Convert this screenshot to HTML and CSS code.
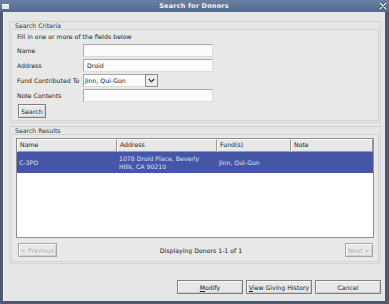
FILE: index.html
```html
<!DOCTYPE html>
<html>
<head>
<meta charset="utf-8">
<link rel="stylesheet" href="styles.css">
</head>
<body>
<div class="window">
  <div class="titlebar">
    <span class="menu-icon"></span>
    <span class="title">Search for Donors</span>
    <svg class="close" width="8" height="8" viewBox="0 0 8 8"><path d="M1 1 L7 7 M7 1 L1 7" stroke="#2a3550" stroke-width="2.6" stroke-linecap="round"/><path d="M1 1 L7 7 M7 1 L1 7" stroke="#ffffff" stroke-width="1.3" stroke-linecap="round"/></svg>
  </div>
  <div class="content">
    <div class="group criteria">
      <div class="legend">Search Criteria</div>
      <div class="panel">
        <div class="hint">Fill in one or more of the fields below</div>
        <div class="form">
          <span class="label">Name</span><div class="input"></div>
          <span class="label">Address</span><div class="input">Droid</div>
          <span class="label">Fund Contributed To</span>
          <div class="combo"><div class="combo-text">Jinn, Qui-Gon</div><div class="combo-btn"><svg width="7" height="5" viewBox="0 0 7 5"><path d="M0.8 1 L3.5 3.8 L6.2 1" fill="none" stroke="#222" stroke-width="1.1"/></svg></div></div>
          <span class="label">Note Contents</span><div class="input"></div>
        </div>
        <div class="search-row"><button class="btn search-btn">Search</button></div>
      </div>
    </div>
    <div class="group results">
      <div class="legend">Search Results</div>
      <div class="panel">
        <div class="table">
          <div class="thead">
            <div class="th c1">Name</div><div class="th c2">Address</div><div class="th c3">Fund(s)</div><div class="th c4">Note</div>
          </div>
          <div class="row selected">
            <div class="td c1">C-3PO</div><div class="td c2">1078 Droid Place, Beverly<br>Hills, CA 90210</div><div class="td c3">Jinn, Qui-Gon</div><div class="td c4"></div>
          </div>
        </div>
        <div class="pager">
          <button class="btn disabled prev">&lt; Previous</button>
          <span class="status">Displaying Donors 1-1 of 1</span>
          <button class="btn disabled next">Next &gt;</button>
        </div>
      </div>
    </div>
    <div class="actions">
      <button class="btn act"><u>M</u>odify</button>
      <button class="btn act"><u>V</u>iew Giving History</button>
      <button class="btn act">Cancel</button>
    </div>
  </div>
</div>
</body>
</html>
```
FILE: styles.css
```css
* { box-sizing: border-box; }
html, body { margin: 0; padding: 0; }
body {
  width: 389px;
  height: 304px;
  overflow: hidden;
  font-family: "DejaVu Sans", sans-serif;
  font-size: 6.2px;
  color: #1a1a1a;
  background: #4f5b74;
}
.window {
  width: 389px;
  height: 304px;
  display: flex;
  flex-direction: column;
  border-left: 3px solid #4e5a73;
  border-right: 4px solid #4e5a73;
  border-bottom: 3px solid #4e5a73;
  background: #e6e6e6;
}
.titlebar {
  height: 12px;
  flex: none;
  display: flex;
  align-items: center;
  background: linear-gradient(#6a80a3, #526a90);
  margin-left: -3px;
  margin-right: -4px;
  padding: 0 2px 0 2px;
}
.menu-icon {
  width: 7px;
  height: 5px;
  background: #e4e8f0;
  border-top: 1px solid #ffffff;
  flex: none;
}
.title {
  flex: 1;
  text-align: center;
  color: #f2f4f8;
  font-weight: bold;
  font-size: 6.5px;
  letter-spacing: 0.2px;
}
.close { flex: none; }
.content {
  flex: 1;
  display: flex;
  flex-direction: column;
  padding: 9px 4px 0 5px;
  border-left: 1px solid #f6f6f6;
}
.group {
  border: 1px solid #d6d6d6;
  border-top-color: #cfcfcf;
  padding: 0 1px 1px 1px;
  border-radius: 1px;
}
.legend {
  height: 7px;
  line-height: 7px;
  padding-left: 4px;
  color: #333;
}
.panel {
  border: 1px solid #d4d4d4;
  border-right-color: #cdcdcd;
  background: #e8e8e8;
  padding: 3px 4px 2px 4px;
}
.hint { height: 8px; line-height: 8px; padding-left: 1px; }
.form {
  margin-top: 3px;
  display: grid;
  grid-template-columns: 67px 130px;
  grid-auto-rows: 13px;
  row-gap: 2px;
  align-items: center;
}
.label { padding-left: 1px; white-space: nowrap; }
.input {
  height: 13px;
  background: #fbfbfb;
  border: 1px solid #a9a9a9;
  border-right-color: #dcdcdc;
  border-bottom-color: #dcdcdc;
  line-height: 11px;
  padding-left: 3px;
}
.combo { display: flex; height: 13px; }
.combo-text {
  width: 62px;
  background: #fbfbfb;
  border: 1px solid #a9a9a9;
  border-right: none;
  border-bottom-color: #dcdcdc;
  line-height: 11px;
  padding-left: 1px;
  white-space: nowrap;
  overflow: hidden;
}
.combo-btn {
  width: 13px;
  border: 1px solid #8a8a8a;
  background: #ececec;
  display: flex;
  align-items: center;
  justify-content: center;
}
.search-row { margin-top: 2px; height: 14px; }
.btn {
  font-family: inherit;
  font-size: 6.2px;
  color: #1a1a1a;
  background: #e8e8e8;
  border: 1px solid #7f7f7f;
  box-shadow: inset 1px 1px 0 #fafafa, inset -1px -1px 0 #cfcfcf;
  padding: 0;
  height: 14px;
  margin: 0;
}
.search-btn { width: 28px; margin-left: 2px; }
.btn u { text-decoration: underline; }
.criteria { flex: none; }
.results { flex: none; margin-top: 3px; }
.results .panel { padding-top: 3px; padding-bottom: 4px; }
.table {
  height: 100px;
  background: #ffffff;
  border: 1px solid #8e8e8e;
}
.thead {
  display: flex;
  height: 13px;
  background: #e8e8e8;
}
.th {
  border-right: 1px solid #9a9a9a;
  border-bottom: 1px solid #9a9a9a;
  border-left: 1px solid #fbfbfb;
  border-top: 1px solid #fbfbfb;
  line-height: 10px;
  padding-left: 2px;
}
.c1 { width: 100px; }
.c2 { width: 100px; }
.c3 { width: 74px; }
.c4 { flex: 1; }
.row { display: flex; height: 21px; }
.selected { background: #4656a6; color: #dde2ff; }
.td { display: flex; align-items: center; padding-left: 2px; line-height: 8px; }
.pager {
  margin-top: 5px;
  display: flex;
  align-items: center;
  justify-content: space-between;
  padding: 0 1px 0 2px;
}
.disabled {
  color: #a9a9a9;
  border-color: #a6a6a6;
  text-shadow: 1px 1px 0 #fafafa;
}
.prev { width: 39px; }
.next { width: 28px; }
.status { margin-left: 0; }
.actions {
  margin-top: 16px;
  display: flex;
  justify-content: flex-end;
  gap: 3px;
}
.act { width: 66px; }
```
